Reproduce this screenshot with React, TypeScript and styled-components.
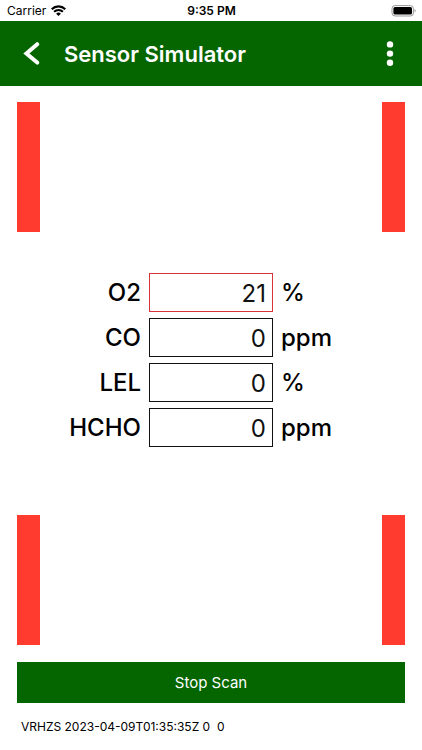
import React, { useState } from "react";
import styled, { createGlobalStyle } from "styled-components";

const GlobalStyle = createGlobalStyle`
  *, *::before, *::after { box-sizing: border-box; }
  body { margin: 0; background: #fff; }
  button, input { font: inherit; margin: 0; }
`;

const Screen = styled.div`
  min-height: 100vh;
  display: flex;
  flex-direction: column;
  background: #fff;
  color: #000;
  font-family: Inter, "Liberation Sans", sans-serif;
`;

const StatusBar = styled.div`
  display: grid;
  grid-template-columns: 1fr auto 1fr;
  align-items: center;
  height: 21px;
  padding: 0 6px 0 7px;
  font-size: 12px;
  line-height: 21px;
`;

const Carrier = styled.div`
  display: flex;
  align-items: center;
  gap: 5px;
`;

const Clock = styled.time`
  font-weight: 600;
`;

const BatteryIcon = styled.svg`
  justify-self: end;
`;

const Header = styled.header`
  display: flex;
  align-items: center;
  height: 65px;
  padding: 0 16px;
  background: #056600;
  color: #fff;
`;

const IconButton = styled.button`
  display: grid;
  place-items: center;
  width: 32px;
  height: 40px;
  padding: 0;
  border: 0;
  background: none;
  color: inherit;
`;

const Title = styled.h1`
  flex: 1;
  margin: 0 0 0 16px;
  font-size: 22px;
  line-height: 28px;
  font-weight: 600;
`;

const Main = styled.main`
  flex: 1;
  display: flex;
  flex-direction: column;
  padding: 16px 17px 14px;
`;

const MarkerRow = styled.div<{ $bottom?: boolean }>`
  display: flex;
  justify-content: space-between;
  margin-top: ${(p) => (p.$bottom ? "auto" : "0")};
`;

const Marker = styled.div`
  width: 23px;
  height: 130px;
  background: #ff3b30;
`;

const Readings = styled.div`
  display: grid;
  gap: 6px;
  margin: 41px 0;
`;

const Reading = styled.label`
  display: grid;
  grid-template-columns: 1fr 124px 1fr;
  align-items: center;
  column-gap: 8px;
  font-size: 24px;
  line-height: 39px;
`;

const SensorName = styled.span`
  text-align: right;
  font-weight: 450;
`;

const Unit = styled.span`
  font-weight: 450;
`;

const ValueInput = styled.input<{ $alarm: boolean }>`
  width: 100%;
  height: 39px;
  padding: 2px 6px 0;
  border: 1px solid ${(p) => (p.$alarm ? "#d8333a" : "#111")};
  border-radius: 0;
  outline: none;
  background: #fff;
  color: #111;
  text-align: right;
`;

const ScanButton = styled.button`
  height: 41px;
  margin-top: 17px;
  padding: 0;
  border: 0;
  background: #056600;
  color: #fff;
  font-size: 15px;
  line-height: 20px;
`;

const DeviceInfo = styled.footer`
  margin-top: 15px;
  padding-left: 4px;
  font-size: 12px;
  line-height: 18px;
  white-space: pre;
`;

const sensors = [
  { name: "O2", initial: "21", unit: "%", alarm: true },
  { name: "CO", initial: "0", unit: "ppm", alarm: false },
  { name: "LEL", initial: "0", unit: "%", alarm: false },
  { name: "HCHO", initial: "0", unit: "ppm", alarm: false },
];

type SensorProps = (typeof sensors)[number];

function SensorReading({ name, initial, unit, alarm }: SensorProps) {
  const [value, setValue] = useState(initial);
  return (
    <Reading>
      <SensorName>{name}</SensorName>
      <ValueInput
        $alarm={alarm}
        inputMode="decimal"
        value={value}
        onChange={(e) => setValue(e.target.value)}
      />
      <Unit>{unit}</Unit>
    </Reading>
  );
}

export default function App() {
  return (
    <Screen>
      <GlobalStyle />
      <StatusBar>
        <Carrier>
          Carrier
          <svg width="15" height="11" viewBox="0 0 15 11" fill="none" stroke="#000" strokeWidth="2.1" aria-hidden="true">
            <path d="M.7 4.2a9.6 9.6 0 0 1 13.6 0" />
            <path d="M3.1 6.8a6.2 6.2 0 0 1 8.8 0" />
            <path d="M5.1 8.8a3.4 3.4 0 0 1 4.8 0L7.5 11Z" fill="#000" stroke="none" />
          </svg>
        </Carrier>
        <Clock>9:35 PM</Clock>
        <BatteryIcon width="25" height="12" viewBox="0 0 25 12" aria-hidden="true">
          <rect x="1" y=".6" width="21.4" height="10.4" rx="3" fill="none" stroke="#999" />
          <rect x="2.4" y="2" width="18.6" height="7.6" rx="1.6" fill="#000" />
          <path d="M23.6 4v3.6c1.4-.6 1.4-3 0-3.6Z" fill="#888" />
        </BatteryIcon>
      </StatusBar>
      <Header>
        <IconButton aria-label="Back">
          <svg width="18" height="24" viewBox="0 0 18 24" fill="none" stroke="#fff" strokeWidth="4" strokeLinecap="round" strokeLinejoin="miter" aria-hidden="true">
            <path d="M14.2 2.2 3.4 11.4l10.8 9.2" />
          </svg>
        </IconButton>
        <Title>Sensor Simulator</Title>
        <IconButton aria-label="More options">
          <svg width="8" height="26" viewBox="0 0 8 26" fill="#fff" aria-hidden="true">
            <circle cx="4" cy="3.4" r="3.2" />
            <circle cx="4" cy="12.6" r="3.2" />
            <circle cx="4" cy="21.8" r="3.2" />
          </svg>
        </IconButton>
      </Header>
      <Main>
        <MarkerRow>
          <Marker />
          <Marker />
        </MarkerRow>
        <Readings>
          {sensors.map((s) => (
            <SensorReading key={s.name} {...s} />
          ))}
        </Readings>
        <MarkerRow $bottom>
          <Marker />
          <Marker />
        </MarkerRow>
        <ScanButton>Stop Scan</ScanButton>
        <DeviceInfo>{"VRHZS 2023-04-09T01:35:35Z 0  0"}</DeviceInfo>
      </Main>
    </Screen>
  );
}
